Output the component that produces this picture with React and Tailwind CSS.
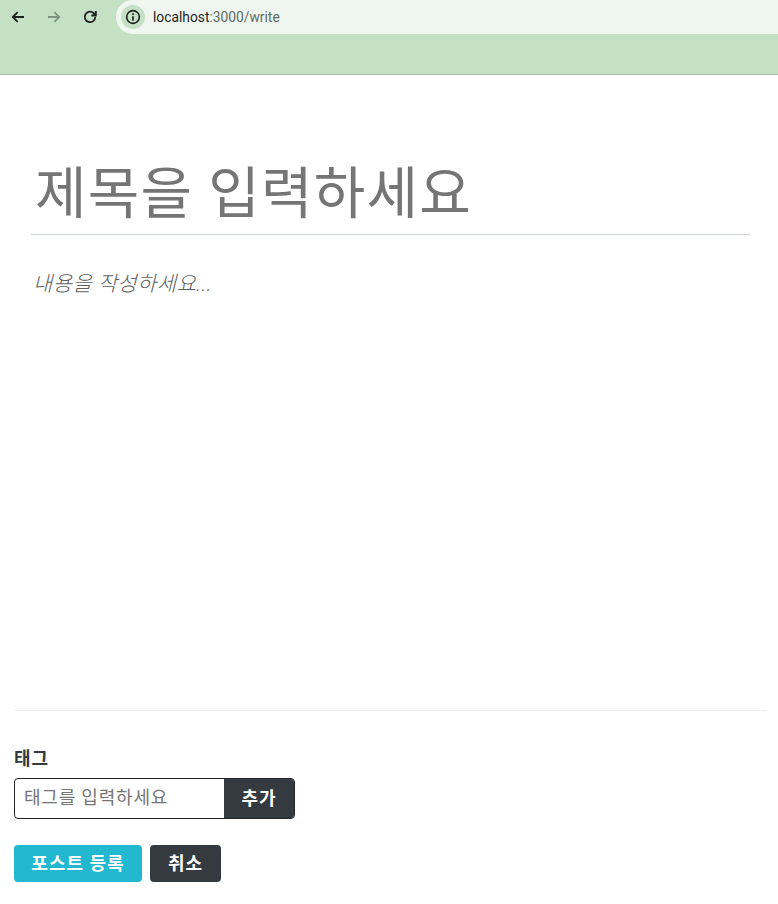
import { useState } from "react"

const font = "font-['Roboto','Noto_Sans_CJK_KR',sans-serif]"

function BrowserBar() {
  return (
    <div className="h-[75px] bg-[#c5e1c5] border-b border-[#a3baa3]">
      <div className="flex items-center h-[34px]">
        <div className="flex items-center pl-[9px] gap-[18px] w-[116px]">
          <svg width="18" height="18" viewBox="0 0 24 24" fill="none" stroke="#1f1f1f" strokeWidth="2.4">
            <path d="M20 12H5M11.5 5.5 5 12l6.5 6.5" />
          </svg>
          <svg width="18" height="18" viewBox="0 0 24 24" fill="none" stroke="#7f9480" strokeWidth="2.4">
            <path d="M4 12h15M12.5 5.5 19 12l-6.5 6.5" />
          </svg>
          <svg width="18" height="18" viewBox="0 0 24 24" fill="none" stroke="#1f1f1f" strokeWidth="2.4">
            <path d="M19 12a7 7 0 1 1-2-5l2.5 2.5" />
            <path d="M19.8 4v6h-6" fill="none" />
          </svg>
        </div>
        <div className="flex-1 h-[34px] bg-[#eff6ef] rounded-l-[17px] flex items-center pl-[5px]">
          <div className="w-6 h-6 rounded-full bg-[#c5e1c5] flex items-center justify-center">
            <svg width="16" height="16" viewBox="0 0 24 24" fill="none" stroke="#1f1f1f" strokeWidth="2.4">
              <circle cx="12" cy="12" r="9.5" />
              <path d="M12 11v6.5M12 6.5v2.5" />
            </svg>
          </div>
          <span className="ml-2 text-[13.8px] text-[#1f1f1f] font-['Roboto',sans-serif]">
            localhost<span className="text-[#5c6b5f]">:3000/write</span>
          </span>
        </div>
      </div>
    </div>
  )
}

function App() {
  const [title, setTitle] = useState("")
  const [content, setContent] = useState("")
  const [tag, setTag] = useState("")

  return (
    <div className={`min-h-[904px] bg-white ${font}`}>
      <BrowserBar />
      <div className="pt-[74px] pl-[31px] pr-[28px]">
        <input
          value={title}
          onChange={(e) => setTitle(e.target.value)}
          placeholder="제목을 입력하세요"
          className="w-full h-[86px] pl-1 pt-[4px] text-[56px] tracking-[1.2px] border-b border-[#ced4da] outline-none placeholder:text-[#757575]"
        />
        <textarea
          value={content}
          onChange={(e) => setContent(e.target.value)}
          placeholder="내용을 작성하세요..."
          className="block w-full h-[475px] mt-[34px] pl-[2px] text-[21px] leading-[30px] font-light italic tracking-[0.4px] outline-none resize-none placeholder:text-[#5f5f5f]"
        />
      </div>
      <div className="ml-[14px] mr-[11px] mt-[-34px] border-t border-[#eeeeee] pt-9">
        <div className="text-[18px] leading-6 font-bold tracking-[1px] text-[#343a40] mb-[7px]">태그</div>
        <div className="flex w-[281px] h-[41px] border border-[#212529] rounded overflow-hidden">
          <input
            value={tag}
            onChange={(e) => setTag(e.target.value)}
            placeholder="태그를 입력하세요"
            className="w-[209px] pl-[9px] pr-[10px] pb-[2px] text-[18px] tracking-[0.8px] outline-none placeholder:text-[#757575]"
          />
          <button className="flex-1 bg-[#343a40] text-white font-bold text-[18px] tracking-[1px]">추가</button>
        </div>
        <div className="flex gap-2 mt-[26px]">
          <button className="w-[128px] h-[37px] rounded bg-[#22b8cf] text-white font-bold text-[18px] tracking-[1px]">포스트 등록</button>
          <button className="w-[71px] h-[37px] rounded bg-[#343a40] text-white font-bold text-[18px] tracking-[1px]">취소</button>
        </div>
      </div>
    </div>
  )
}

export default App
